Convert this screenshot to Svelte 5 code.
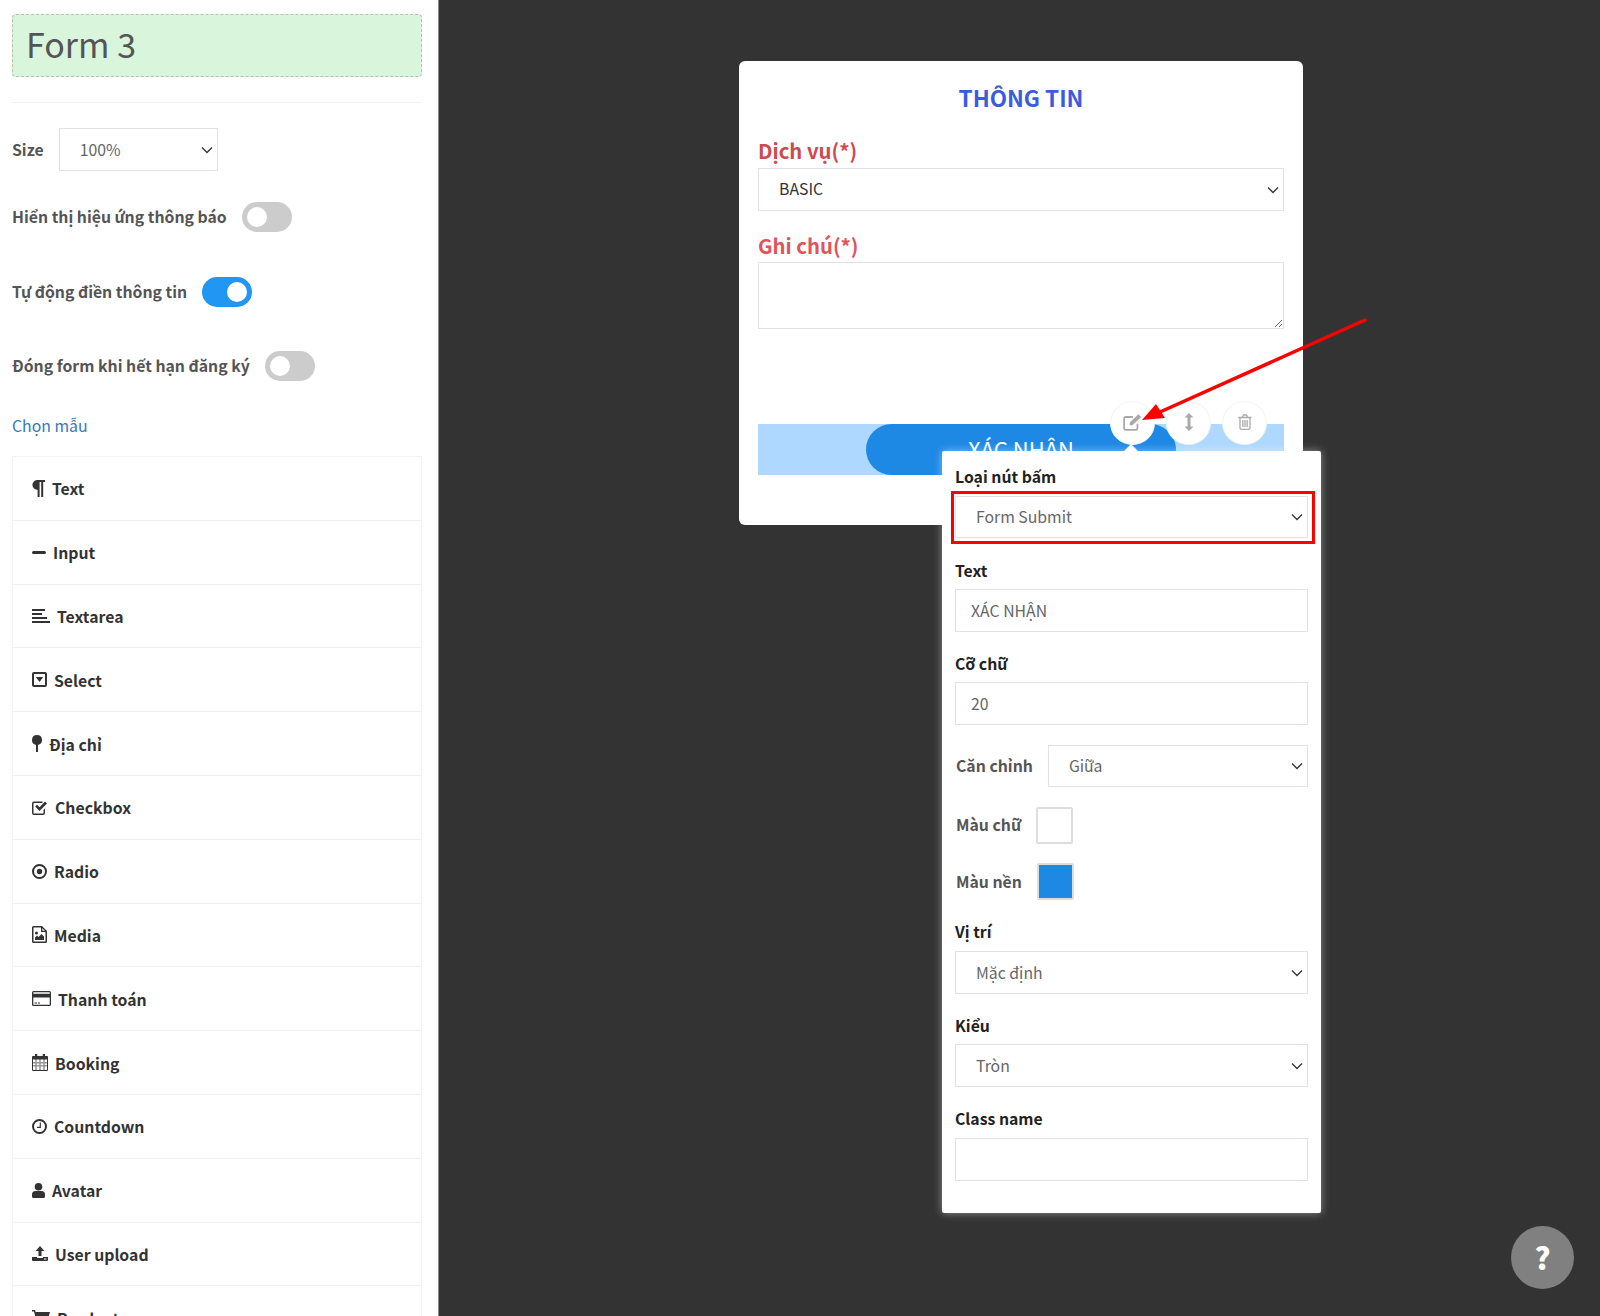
<script>
  // sidebar elements: w/h are the icon's size in px, d is drawn in that box
  const elements = [
    { label: 'Text', w: 13, h: 17, d: 'M5 0H13V2H11.2V17H9.2V2H7.6V17H5.6V9.8A4.9 4.9 0 0 1 5 0Z' },
    { label: 'Input', w: 14, h: 3, d: 'M1.5 0H12.5A1.5 1.5 0 0 1 12.5 3H1.5A1.5 1.5 0 0 1 1.5 0Z' },
    { label: 'Textarea', w: 18, h: 14, d: 'M0 0H13V2H0ZM0 4H10V6H0ZM0 8H15V10H0ZM0 12H18V14H0Z' },
    { label: 'Select', w: 15, h: 15, d: 'M2 0H13A2 2 0 0 1 15 2V13A2 2 0 0 1 13 15H2A2 2 0 0 1 0 13V2A2 2 0 0 1 2 0ZM2 2V13H13V2ZM3.8 5H11.2L7.5 10Z' },
    { label: 'Địa chỉ', w: 10, h: 17, d: 'M5 0A5 5 0 0 1 6 9.9V17H4V9.9A5 5 0 0 1 5 0Z' },
    { label: 'Checkbox', w: 16, h: 15, d: 'M2 1.5H10.5V3H2A.5.5 0 0 0 1.5 3.5V13A.5.5 0 0 0 2 13.5H11A.5.5 0 0 0 11.5 13V10L13 8.5V13A2 2 0 0 1 11 15H2A2 2 0 0 1 0 13V3.5A2 2 0 0 1 2 1.5ZM3.2 6.5L5 4.7L7.5 7.2L13 1.5L15 3.4L7.5 11Z' },
    { label: 'Radio', w: 15, h: 15, d: 'M7.5 0A7.5 7.5 0 1 1 7.5 15A7.5 7.5 0 1 1 7.5 0ZM7.5 2A5.5 5.5 0 1 0 7.5 13A5.5 5.5 0 1 0 7.5 2ZM7.5 4.8A2.7 2.7 0 1 1 7.5 10.2A2.7 2.7 0 1 1 7.5 4.8Z' },
    { label: 'Media', w: 15, h: 17, d: 'M1.5 0H10L15 5V15.5A1.5 1.5 0 0 1 13.5 17H1.5A1.5 1.5 0 0 1 0 15.5V1.5A1.5 1.5 0 0 1 1.5 0ZM1.5 1.5V15.5H13.5V6H9V1.5ZM10.3 2.2V4.7H12.8ZM4.5 5.5A1.5 1.5 0 1 1 4.5 8.5A1.5 1.5 0 1 1 4.5 5.5ZM3 14V11.5L5 9.5L6.5 11L9.5 8L12 10.5V14Z' },
    { label: 'Thanh toán', w: 19, h: 15, d: 'M1.5 0H17.5A1.5 1.5 0 0 1 19 1.5V13.5A1.5 1.5 0 0 1 17.5 15H1.5A1.5 1.5 0 0 1 0 13.5V1.5A1.5 1.5 0 0 1 1.5 0ZM1.3 1.3V2.8H17.7V1.3ZM1.3 6.5V13.7H17.7V6.5ZM2.5 11.5H5V12.5H2.5ZM6 11.5H8V12.5H6Z' },
    { label: 'Booking', w: 16, h: 17, d: 'M3 0H5.2V2H10.8V0H13V2H15A1 1 0 0 1 16 3V16A1 1 0 0 1 15 17H1A1 1 0 0 1 0 16V3A1 1 0 0 1 1 2H3ZM1 5.5V16H15V5.5ZM3.6 5.5H4.4V16H3.6ZM7.6 5.5H8.4V16H7.6ZM11.6 5.5H12.4V16H11.6ZM1 8.4H15V9.2H1ZM1 11.4H15V12.2H1Z' },
    { label: 'Countdown', w: 15, h: 15, d: 'M7.5 0A7.5 7.5 0 1 1 7.5 15A7.5 7.5 0 1 1 7.5 0ZM7.5 2A5.5 5.5 0 1 0 7.5 13A5.5 5.5 0 1 0 7.5 2ZM7.7 3.5H8.9V9H5V7.8H7.7Z' },
    { label: 'Avatar', w: 13, h: 15, d: 'M6.5 0A3.8 3.8 0 1 1 6.5 7.6A3.8 3.8 0 1 1 6.5 0ZM3.5 8H9.5A3.5 3.5 0 0 1 13 11.5V13.5A1.5 1.5 0 0 1 11.5 15H1.5A1.5 1.5 0 0 1 0 13.5V11.5A3.5 3.5 0 0 1 3.5 8Z' },
    { label: 'User upload', w: 16, h: 15, d: 'M8 0L12.5 5H9.5V10H6.5V5H3.5ZM0 11H5V12H11V11H16V14A1 1 0 0 1 15 15H1A1 1 0 0 1 0 14ZM12 12.5V13.5H14.5V12.5Z' },
    { label: 'Product', w: 18, h: 16, d: 'M0 0H3L3.6 2H18L16 9H5.5L6 10.5H16V12H4.8L2 1.5H0ZM6 13A1.5 1.5 0 1 1 6 16A1.5 1.5 0 1 1 6 13ZM14 13A1.5 1.5 0 1 1 14 16A1.5 1.5 0 1 1 14 13Z' }
  ];
</script>

<div class="page">
  <aside class="sidebar">
    <div class="form-name">Form 3</div>
    <hr />

    <div class="size-row">
      <span class="opt-label">Size</span>
      <select class="field size-select"><option>100%</option></select>
    </div>

    <div class="toggle-row first">
      <span class="opt-label">Hiển thị hiệu ứng thông báo</span>
      <span class="toggle"><span class="knob"></span></span>
    </div>
    <div class="toggle-row">
      <span class="opt-label">Tự động điền thông tin</span>
      <span class="toggle on"><span class="knob"></span></span>
    </div>
    <div class="toggle-row">
      <span class="opt-label">Đóng form khi hết hạn đăng ký</span>
      <span class="toggle"><span class="knob"></span></span>
    </div>

    <a class="template-link" href="#templates">Chọn mẫu</a>

    <ul class="element-list">
      {#each elements as item}
        <li>
          <svg width={item.w} height={item.h} viewBox="0 0 {item.w} {item.h}">
            <path d={item.d} fill="currentColor" fill-rule="evenodd" />
          </svg>
          <span class="item-label">{item.label}</span>
        </li>
      {/each}
    </ul>
  </aside>

  <main class="canvas">
    <section class="card">
      <h2>THÔNG TIN</h2>
      <label class="form-label" for="service">Dịch vụ(*)</label>
      <select id="service" class="field dark"><option>BASIC</option></select>
      <label class="form-label note" for="note">Ghi chú(*)</label>
      <textarea id="note" class="field"></textarea>
      <div class="submit-band">
        <div class="submit-btn">XÁC NHẬN</div>
      </div>
    </section>

    <div class="tools">
      <span class="tool">
        <svg width="20" height="18" viewBox="0 0 18 16" fill="none" stroke="#aaa">
          <path d="M13 9.5V13.5A1.5 1.5 0 0 1 11.5 15H2.5A1.5 1.5 0 0 1 1 13.5V5A1.5 1.5 0 0 1 2.5 3.5H9" stroke-width="1.6" />
          <path d="M6 8.5L13.8 1L16.5 3.5L8.5 11H6Z" fill="#aaa" stroke="none" />
        </svg>
      </span>
      <span class="tool">
        <svg width="10" height="20" viewBox="0 0 10 18">
          <path d="M5 0L9.5 4.5H6.5V13.5H9.5L5 18L.5 13.5H3.5V4.5H.5Z" fill="#aaa" />
        </svg>
      </span>
      <span class="tool">
        <svg width="14" height="18" viewBox="0 0 14 16" fill="none" stroke="#aaa" stroke-width="1.3">
          <path d="M2 4V14A1.3 1.3 0 0 0 3.3 15.3H10.7A1.3 1.3 0 0 0 12 14V4M.5 3.5H13.5M4.5 3.5L5.5 1H8.5L9.5 3.5M4.8 6V13M7 6V13M9.2 6V13" />
        </svg>
      </span>
    </div>

    <div class="popup">
      <span class="popup-notch"></span>

      <div class="popup-label">Loại nút bấm</div>
      <div class="highlighted">
        <select class="field"><option>Form Submit</option></select>
      </div>

      <div class="popup-label">Text</div>
      <input class="field" value="XÁC NHẬN" />

      <div class="popup-label">Cỡ chữ</div>
      <input class="field" value="20" />

      <div class="inline-row align-row">
        <span class="opt-label">Căn chỉnh</span>
        <select class="field"><option>Giữa</option></select>
      </div>
      <div class="inline-row color-row">
        <span class="opt-label">Màu chữ</span>
        <span class="swatch"></span>
      </div>
      <div class="inline-row color-row second">
        <span class="opt-label">Màu nền</span>
        <span class="swatch blue"></span>
      </div>

      <div class="popup-label position">Vị trí</div>
      <select class="field"><option>Mặc định</option></select>

      <div class="popup-label">Kiểu</div>
      <select class="field"><option>Tròn</option></select>

      <div class="popup-label class-name">Class name</div>
      <input class="field" value="" />
    </div>

    <div class="help">?</div>

    <!-- red annotation arrow drawn over the screenshot -->
    <svg class="annotation" width="240" height="115" viewBox="0 0 240 115">
      <path d="M229 5L24 97" stroke="#f00" stroke-width="3.5" stroke-linecap="round" />
      <path d="M6 105L20 89L29 103Z" fill="#f00" />
    </svg>
  </main>
</div>

<style>
  :global(body) {
    margin: 0;
    background: #333;
  }

  * {
    box-sizing: border-box;
  }

  .page {
    display: flex;
    height: 1316px;
    overflow: hidden;
    font-family: "Noto Sans CJK SC", "Noto Sans", sans-serif;
    font-size: 15.8px;
    line-height: 24px;
    color: #555;
  }

  .sidebar {
    width: 439px;
    flex: none;
    padding: 14px 16px 0 12px;
    background: #fff;
    border-right: 1px solid #888;
    overflow: hidden;
  }

  .form-name {
    height: 63px;
    padding-left: 13px;
    background: #d9f5dc;
    border: 1px dashed #a9c9ad;
    border-radius: 4px;
    font-size: 34px;
    line-height: 58px;
    color: #555;
  }

  hr {
    margin: 25px 0 0;
    border: 0;
    border-top: 1px solid #f2f2f2;
  }

  .opt-label {
    font-weight: 700;
    color: #555;
    white-space: nowrap;
  }

  .field {
    display: block;
    width: 100%;
    height: 43px;
    padding: 0 15px 1px;
    background: #fff;
    border: 1px solid #e1e1ea;
    border-radius: 0;
    font: inherit;
    color: #666;
    outline: none;
  }

  select.field {
    padding: 0 15px 0 20px;
    appearance: none;
    background: #fff url("data:image/svg+xml,%3Csvg xmlns='http://www.w3.org/2000/svg' width='12' height='8'%3E%3Cpath d='M1 1.5L6 6.5L11 1.5' fill='none' stroke='%23333' stroke-width='1.3'/%3E%3C/svg%3E") no-repeat right 4px center;
  }

  select.dark {
    color: #333;
    padding-bottom: 2px;
  }

  .size-row {
    display: flex;
    align-items: center;
    gap: 15px;
    margin-top: 25px;
  }

  .size-select {
    width: 159px;
  }

  .toggle-row {
    display: flex;
    align-items: center;
    gap: 15px;
    height: 30px;
    margin-top: 44.5px;
  }

  .toggle-row.first {
    margin-top: 31px;
  }

  .toggle {
    display: block;
    width: 50px;
    height: 30px;
    padding: 5px;
    border-radius: 15px;
    background: #ccc;
  }

  .toggle.on {
    background: #2196f3;
    padding-left: 25px;
  }

  .knob {
    display: block;
    width: 20px;
    height: 20px;
    border-radius: 50%;
    background: #fff;
  }

  .template-link {
    display: block;
    margin-top: 33px;
    color: #337ab7;
    text-decoration: none;
  }

  .element-list {
    margin: 18px 0 0;
    padding: 0;
    list-style: none;
    border: 1px solid #f3f3f3;
    border-bottom: 0;
  }

  .element-list li {
    display: flex;
    align-items: center;
    gap: 7px;
    height: 63.8px;
    padding-left: 19px;
    border-bottom: 1px solid #f0f0f0;
    font-weight: 700;
    color: #333;
  }

  .item-label {
    padding-top: 2px;
  }

  .canvas {
    position: relative;
    flex: 1;
    padding: 61px 0 0 300px;
  }

  .card {
    width: 564px;
    height: 464px;
    padding: 0 19px;
    background: #fff;
    border-radius: 6px;
  }

  h2 {
    margin: 0;
    padding-top: 18px;
    height: 74px;
    text-align: center;
    font-size: 22.5px;
    line-height: 36px;
    font-weight: 700;
    color: #3b5be0;
  }

  .form-label {
    display: block;
    margin-bottom: 3px;
    font-size: 20.3px;
    line-height: 30px;
    font-weight: 700;
    color: #cf4a4f;
  }

  .form-label.note {
    margin: 19px 0 2px;
    color: #e0545a;
  }

  textarea.field {
    height: 67px;
    resize: vertical;
  }

  .submit-band {
    display: flex;
    justify-content: center;
    height: 51px;
    margin-top: 95px;
    background: #aed8ff;
  }

  .submit-btn {
    width: 310px;
    border-radius: 26px;
    background: #1e88e5;
    color: #fff;
    text-align: center;
    font-size: 22px;
    line-height: 49px;
  }

  .tools {
    position: absolute;
    top: 401px;
    left: 671px;
    display: flex;
    gap: 11px;
  }

  .tool {
    display: flex;
    align-items: center;
    justify-content: center;
    width: 45px;
    height: 44px;
    padding-bottom: 3px;
    border-radius: 50%;
    background: #fff;
    border: 1px solid #f4f4f4;
  }

  .popup {
    position: absolute;
    top: 451px;
    left: 503px;
    width: 379px;
    height: 762px;
    padding: 14px 13px 0;
    background: #fff;
    border-radius: 2px;
    box-shadow: 0 0 9px rgba(255, 255, 255, 0.45);
  }

  .popup-notch {
    position: absolute;
    top: -7px;
    left: 182px;
    border: 7px solid transparent;
    border-top: 0;
    border-bottom-color: #fff;
  }

  .popup-label {
    height: 24px;
    margin: 20px 0 6px;
    line-height: 23.5px;
    font-weight: 700;
    color: #222;
  }

  .popup-label:first-of-type {
    margin: 0 0 7px;
  }

  .popup-label.position {
    margin-top: 21px;
    line-height: 22px;
  }

  .popup-label.class-name {
    margin-top: 21px;
    line-height: 22px;
  }

  /* red frame from the annotation, sits over the select */
  .highlighted {
    position: relative;
    margin-bottom: 21px;
  }

  .highlighted .field {
    height: 42px;
  }

  .highlighted::after {
    content: '';
    position: absolute;
    inset: -5px -7px -6px -4px;
    border: 3px solid #f00;
    pointer-events: none;
  }

  .highlighted + .popup-label {
    margin-top: 0;
  }

  .inline-row {
    display: flex;
    align-items: center;
    padding-left: 1px;
  }

  .align-row {
    gap: 15px;
    margin-top: 20px;
  }

  .align-row .field {
    height: 42px;
  }

  .color-row {
    gap: 15px;
    margin-top: 19px;
    height: 38px;
  }

  .color-row.second {
    height: 37px;
  }

  .swatch {
    width: 37px;
    height: 37px;
    background: #fff;
    border: 2px solid #ddd;
    border-radius: 2px;
  }

  .swatch.blue {
    background: #1e88e5;
  }

  .help {
    position: absolute;
    top: 1226px;
    left: 1072px;
    width: 63px;
    height: 63px;
    border-radius: 50%;
    background: #808080;
    color: #fff;
    text-align: center;
    font-size: 30px;
    font-weight: 900;
    line-height: 62px;
  }

  .annotation {
    position: absolute;
    top: 315px;
    left: 697px;
  }
</style>
